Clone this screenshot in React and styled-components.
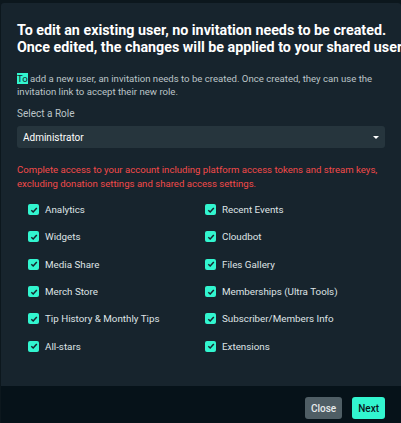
import React from "react";
import styled, { createGlobalStyle } from "styled-components";

const G = createGlobalStyle`
  body { margin:0; background:#0c171d; font-family: Roboto, "Noto Sans", sans-serif; }
`;
const Page = styled.div`width:401px;height:423px;background:#0c171d;padding:3px 0 0 1px;box-sizing:border-box;overflow:hidden;`;
const Modal = styled.div`width:400px;display:flex;flex-direction:column;`;
const Body = styled.div`background:#17242d;padding:19px 16px 26px 16px;border-radius:3px 3px 0 0;`;
const H = styled.h2`margin:0;color:#fff;font-size:14.3px;font-weight:700;line-height:17px;white-space:nowrap;`;
const P = styled.p`margin:17px 0 0;color:#bcc4c8;font-size:9.6px;line-height:12.5px;`;
const Mark = styled.span`background:#32f5cf;color:#17242d;`;
const Label = styled.div`margin-top:10px;color:#bcc4c8;font-size:10px;`;
const Select = styled.div`margin-top:7px;height:22px;background:#26353d;border-radius:3px;display:flex;align-items:center;justify-content:space-between;padding:0 6px;color:#fff;font-size:10px;`;
const Caret = styled.span`width:0;height:0;border-left:3px solid transparent;border-right:3px solid transparent;border-top:3px solid #fff;`;
const Warn = styled.p`margin:15px 0 0;color:#f24a4a;font-size:9.6px;line-height:13.5px;`;
const Grid = styled.div`margin-top:6px;display:grid;grid-template-columns:177px 1fr;padding-left:11px;`;
const Item = styled.div`display:flex;align-items:center;gap:6px;height:27.3px;color:#dfe3e5;font-size:9.8px;`;
const Box = styled.span`width:11px;height:11px;border-radius:2px;background:#32f5cf;display:flex;align-items:center;justify-content:center;`;
const Footer = styled.div`background:#061219;height:45px;display:flex;justify-content:flex-end;align-items:center;gap:10px;padding:0 16px;`;
const Btn = styled.button`border:none;border-radius:3px;height:22px;padding:0 6px;font-family:inherit;font-size:10px;font-weight:500;
  background:${p=>p.primary?"#32f5cf":"#4f5e65"};color:${p=>p.primary?"#09161d":"#e6eaeb"};`;

const items=["Analytics","Recent Events","Widgets","Cloudbot","Media Share","Files Gallery","Merch Store","Memberships (Ultra Tools)","Tip History & Monthly Tips","Subscriber/Members Info","All-stars","Extensions"];

export default function App(){
  return <Page><G/><Modal><Body>
    <H>To edit an existing user, no invitation needs to be created.<br/>Once edited, the changes will be applied to your shared user.</H>
    <P><Mark>To</Mark> add a new user, an invitation needs to be created. Once created, they can use the invitation link to accept their new role.</P>
    <Label>Select a Role</Label>
    <Select>Administrator<Caret/></Select>
    <Warn>Complete access to your account including platform access tokens and stream keys, excluding donation settings and shared access settings.</Warn>
    <Grid>{items.map(t=><Item key={t}><Box><svg width="8" height="8" viewBox="0 0 8 8"><path d="M1.3 4.2 L3.2 6 L6.8 2" stroke="#17242d" strokeWidth="1.5" fill="none"/></svg></Box>{t}</Item>)}</Grid>
  </Body>
  <Footer><Btn>Close</Btn><Btn primary>Next</Btn></Footer></Modal></Page>;
}
